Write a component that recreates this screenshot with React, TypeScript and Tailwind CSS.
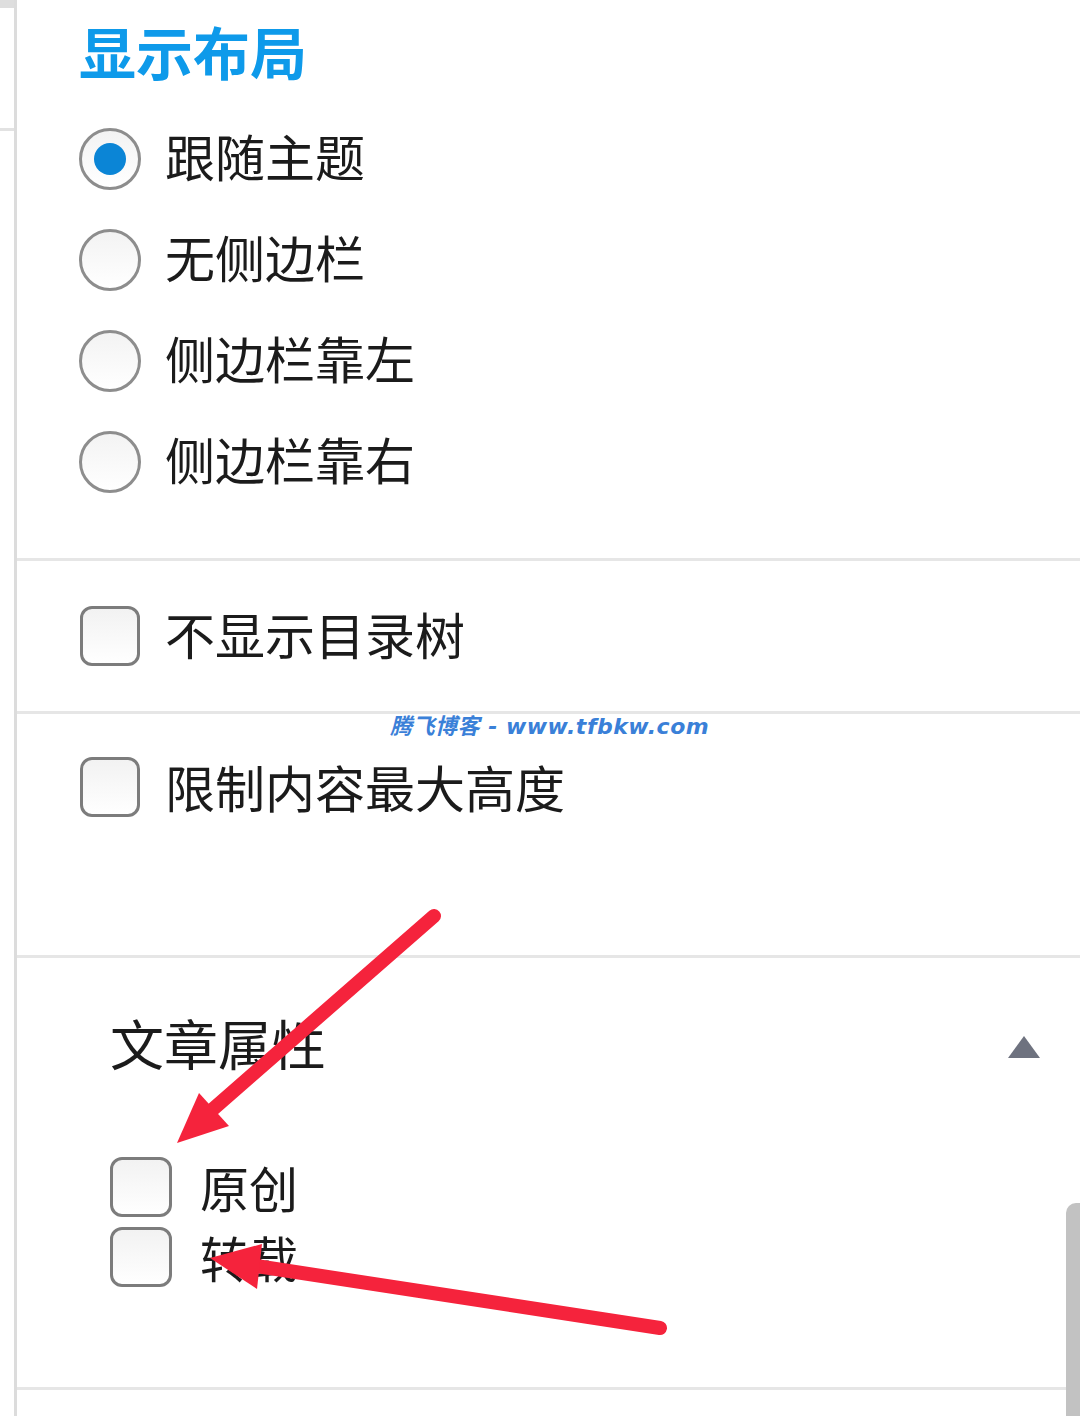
import React from 'react';

const cjk = { fontFamily: '"Noto Sans CJK SC", "Noto Sans", sans-serif' };

const Radio = ({ checked }: { checked?: boolean }) => (
  <div className="w-[62px] h-[62px] rounded-full border-[3px] border-[#8d8d8d] bg-gradient-to-b from-[#f3f3f3] to-white flex items-center justify-center shrink-0">
    {checked && <div className="w-[32px] h-[32px] rounded-full bg-[#0b85d6]" />}
  </div>
);

const Checkbox = ({ small }: { small?: boolean }) => (
  <div
    className={
      small
        ? 'w-[62px] h-[60px] rounded-[12px] border-[3px] border-[#7c7c7c] bg-gradient-to-b from-[#f2f2f2] to-white shrink-0'
        : 'w-[60px] h-[60px] rounded-[12px] border-[3px] border-[#7c7c7c] bg-gradient-to-b from-[#f2f2f2] to-white shrink-0'
    }
  />
);

const Divider = () => <div className="h-[3px] bg-[#e6e6e6]" />;

const layouts = ['跟随主题', '无侧边栏', '侧边栏靠左', '侧边栏靠右'];

const App = () => {
  return (
    <div className="relative w-[1080px] h-[1416px] overflow-hidden bg-white flex" style={cjk}>
      {/* left strip */}
      <div className="w-[14px] flex flex-col shrink-0">
        <div className="h-[8px] bg-[#dedede]" />
        <div className="h-[120px]" />
        <div className="h-[3px] bg-[#e2e2e2]" />
      </div>
      <div className="w-[3px] bg-[#dcdcdc] shrink-0" />

      <div className="flex-1 flex flex-col">
        {/* display layout */}
        <div className="pl-[62px] pb-[46px]">
          <div className="h-[108px] flex items-center">
            <h2 className="text-[57px] leading-none font-bold text-[#0e9aea] -mt-[7px]">显示布局</h2>
          </div>
          {layouts.map((l, i) => (
            <div key={l} className="h-[101px] flex items-center gap-[24px]">
              <Radio checked={i === 0} />
              <span className="text-[50px] leading-none text-[#1b1b1b] -mt-[8px]">{l}</span>
            </div>
          ))}
        </div>
        <Divider />

        <div className="h-[150px] pl-[63px] flex items-center gap-[25px]">
          <Checkbox />
          <span className="text-[50px] leading-none text-[#1b1b1b] -mt-[7px]">不显示目录树</span>
        </div>
        <Divider />

        <div className="h-[241px] pl-[63px] pt-[43px]">
          <div className="h-[60px] flex items-center gap-[25px]">
            <Checkbox />
            <span className="text-[50px] leading-none text-[#1b1b1b] -mt-[3px]">限制内容最大高度</span>
          </div>
        </div>
        <Divider />

        {/* article attributes */}
        <div className="h-[429px] pl-[93px] pr-[40px] flex flex-col">
          <div className="h-[178px] flex items-center justify-between">
            <span className="text-[54px] leading-none text-[#1b1b1b] -mt-[8px]">文章属性</span>
            <svg width="32" height="22" viewBox="0 0 32 22">
              <polygon points="16,0 32,22 0,22" fill="#6e727f" />
            </svg>
          </div>
          <div className="pt-[21px] flex flex-col gap-[10px]">
            <div className="flex items-center gap-[28px]">
              <Checkbox small />
              <span className="text-[49px] leading-none text-[#1b1b1b] -mt-[2px]">原创</span>
            </div>
            <div className="flex items-center gap-[28px]">
              <Checkbox small />
              <span className="text-[49px] leading-none text-[#1b1b1b] -mt-[2px]">转载</span>
            </div>
          </div>
        </div>
        <Divider />
      </div>

      {/* watermark */}
      <div
        className="absolute left-[390px] top-[716px] text-[22px] leading-none font-bold italic text-[#3a80d8] tracking-[0.5px]"
        style={{ fontFamily: '"DejaVu Sans", "Noto Sans CJK SC", sans-serif' }}
      >
        腾飞博客 - www.tfbkw.com
      </div>

      {/* scrollbar */}
      <div className="absolute right-0 top-[1203px] bottom-0 w-[14px] bg-[#c2c2c2] rounded-tl-[10px]" />

      {/* annotation arrows */}
      <svg className="absolute inset-0 pointer-events-none" width="1080" height="1416" viewBox="0 0 1080 1416">
        <line x1="434" y1="916" x2="212" y2="1110" stroke="#f5233c" strokeWidth="14" strokeLinecap="round" />
        <polygon points="177,1143 199,1093 229,1126" fill="#f5233c" />
        <line x1="660" y1="1328" x2="250" y2="1265" stroke="#f5233c" strokeWidth="14" strokeLinecap="round" />
        <polygon points="210,1258 262,1244 257,1289" fill="#f5233c" />
      </svg>
    </div>
  );
};

export default App;
